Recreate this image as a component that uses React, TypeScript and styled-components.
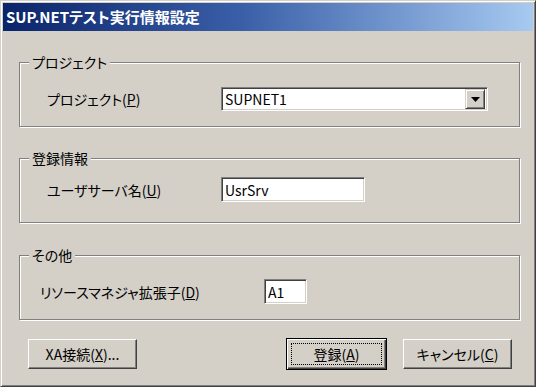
import React from "react";
import styled, { createGlobalStyle } from "styled-components";

const GlobalStyle = createGlobalStyle`
  html, body {
    margin: 0;
    padding: 0;
    background: #fff;
  }
  body {
    font-family: "Noto Sans CJK JP", "DejaVu Sans", sans-serif;
    font-feature-settings: "palt";
    color: #000;
  }
`;

/* window frame */
const Window = styled.div`
  box-sizing: border-box;
  width: 536px;
  height: 387px;
  background: #d4d0c8;
  border: 1px solid;
  border-color: #d4d0c8 #404040 #404040 #d4d0c8;
  box-shadow: inset 1px 1px #fff, inset -1px -1px #808080;
  padding: 2px;
  display: flex;
  flex-direction: column;
`;

const TitleBar = styled.div`
  height: 28px;
  background: linear-gradient(to right, #0a246a 0%, #3a5fa8 45%, #a6caf0 100%);
  color: #fff;
  font-weight: bold;
  font-size: 15px;
  line-height: 28px;
  padding-left: 3px;
  white-space: nowrap;
`;

const Body = styled.div`
  padding: 31px 0 0 16px;
  display: flex;
  flex-direction: column;
`;

/* group box */
const Group = styled.div<{ $gap: number; $padTop: number }>`
  position: relative;
  box-sizing: border-box;
  width: 501px;
  height: 65px;
  margin-top: ${(p) => p.$gap}px;
  border: 1px solid #808080;
  box-shadow: inset 1px 1px #fff, 1px 1px #fff;
  padding-top: ${(p) => p.$padTop}px;
`;

const Legend = styled.span`
  position: absolute;
  top: -10px;
  left: 9px;
  padding: 0 3px;
  background: #d4d0c8;
  font-size: 14px;
  line-height: 18px;
  white-space: nowrap;
`;

const Row = styled.div<{ $indent: number }>`
  display: flex;
  align-items: center;
  padding-left: ${(p) => p.$indent}px;
`;

const Label = styled.span<{ $w: number }>`
  width: ${(p) => p.$w}px;
  font-size: 14px;
  white-space: nowrap;
`;

/* sunken field */
const Field = styled.div<{ $w: number; $h: number }>`
  box-sizing: border-box;
  width: ${(p) => p.$w}px;
  height: ${(p) => p.$h}px;
  background: #fff;
  border: 1px solid;
  border-color: #808080 #fff #fff #808080;
  box-shadow: inset 1px 1px #404040, inset -1px -1px #d4d0c8;
  padding: 0 2px 0 3px;
  display: flex;
  align-items: center;
  font-size: 14px;
  white-space: nowrap;
`;

const FieldText = styled.span`
  flex: 1;
`;

const DropButton = styled.div`
  box-sizing: border-box;
  width: 20px;
  height: 20px;
  background: #d4d0c8;
  border: 1px solid;
  border-color: #d4d0c8 #404040 #404040 #d4d0c8;
  box-shadow: inset 1px 1px #fff, inset -1px -1px #808080;
  display: flex;
  align-items: center;
  justify-content: center;
`;

/* buttons */
const ButtonRow = styled.div`
  display: flex;
  align-items: center;
  width: 501px;
  margin-top: 18px;
`;

const Button = styled.button<{ $w: number; $isDefault?: boolean; $left?: number }>`
  position: relative;
  box-sizing: border-box;
  width: ${(p) => p.$w}px;
  height: ${(p) => (p.$isDefault ? 32 : 30)}px;
  margin-left: ${(p) => p.$left ?? 0}px;
  padding: 0;
  background: #d4d0c8;
  font-family: "Noto Sans CJK JP", "DejaVu Sans", sans-serif;
  font-feature-settings: "palt";
  font-size: 14px;
  color: #000;
  border: 1px solid;
  border-color: ${(p) => (p.$isDefault ? "#000" : "#fff #404040 #404040 #fff")};
  box-shadow: ${(p) =>
    p.$isDefault
      ? "inset 1px 1px #fff, inset -1px -1px #404040, inset -2px -2px #808080"
      : "inset -1px -1px #808080"};
  white-space: nowrap;

  &::after {
    content: "";
    display: ${(p) => (p.$isDefault ? "block" : "none")};
    position: absolute;
    inset: 4px;
    border: 1px dotted #000;
  }
`;

function App() {
  return (
    <>
      <GlobalStyle />
      <Window>
        <TitleBar>SUP.NETテスト実行情報設定</TitleBar>
        <Body>
          <Group $gap={0} $padTop={24}>
            <Legend>プロジェクト</Legend>
            <Row $indent={27}>
              <Label $w={174}>
                プロジェクト(<u>P</u>)
              </Label>
              <Field $w={267} $h={24}>
                <FieldText>SUPNET1</FieldText>
                <DropButton>
                  <svg width="9" height="5" viewBox="0 0 9 5">
                    <path d="M0 0H9L4.5 5Z" fill="#000" />
                  </svg>
                </DropButton>
              </Field>
            </Row>
          </Group>

          <Group $gap={31} $padTop={18}>
            <Legend>登録情報</Legend>
            <Row $indent={27}>
              <Label $w={174}>
                ユーザサーバ名(<u>U</u>)
              </Label>
              <Field $w={144} $h={25}>
                <FieldText>UsrSrv</FieldText>
              </Field>
            </Row>
          </Group>

          <Group $gap={32} $padTop={23}>
            <Legend>その他</Legend>
            <Row $indent={20}>
              <Label $w={224}>
                リソースマネジャ拡張子(<u>D</u>)
              </Label>
              <Field $w={43} $h={25}>
                <FieldText>A1</FieldText>
              </Field>
            </Row>
          </Group>

          <ButtonRow>
            <Button $w={109} $left={9}>
              XA接続(<u>X</u>)...
            </Button>
            <Button $w={101} $isDefault $left={149}>
              登録(<u>A</u>)
            </Button>
            <Button $w={109} $left={16}>
              キャンセル(<u>C</u>)
            </Button>
          </ButtonRow>
        </Body>
      </Window>
    </>
  );
}

export default App;
